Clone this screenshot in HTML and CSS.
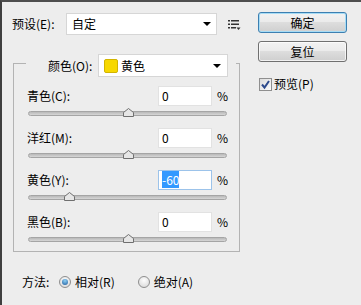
FILE: index.html
```html
<!DOCTYPE html>
<html lang="zh-CN">
<head>
<meta charset="UTF-8" />
<meta name="viewport" content="width=device-width, initial-scale=1.0"/>
<title>可选颜色</title>
<link rel="stylesheet" href="styles.css">
</head>
<body>
<div class="window">
    <div class="main">
        <div class="preset-row">
            <span class="label preset-label">预设(E):</span>
            <div class="select preset-select"><span>自定</span><i class="arrow"></i></div>
            <svg class="menu-icon" width="13" height="10" viewBox="0 0 13 10">
                <rect x="0" y="0" width="2" height="1.5" fill="#333"/>
                <rect x="3" y="0" width="8" height="1.5" fill="#333"/>
                <rect x="0" y="3.5" width="2" height="1.5" fill="#333"/>
                <rect x="3" y="3.5" width="8" height="1.5" fill="#333"/>
                <rect x="0" y="7" width="2" height="1.5" fill="#333"/>
                <rect x="3" y="7" width="5" height="1.5" fill="#333"/>
                <polygon points="8.5,7.5 12.5,7.5 10.5,10" fill="#333"/>
            </svg>
        </div>
        <fieldset class="group">
            <legend class="group-head">
                <span class="label head-label">颜色(O):</span>
                <div class="select color-select"><span class="swatch"></span><span>黄色</span><i class="arrow"></i></div>
            </legend>
            <div class="channel">
                <div class="channel-top"><span class="label">青色(C):</span><div class="field">0</div><span class="pct">%</span></div>
                <div class="slider"><div class="track"></div><svg class="thumb" style="left: 50%" width="11" height="9" viewBox="0 0 11 9"><polygon points="0.5,8.5 0.5,4.5 5.5,0.5 10.5,4.5 10.5,8.5" fill="#e6e6e6" stroke="#6f6f6f"/></svg></div>
            </div>
            <div class="channel">
                <div class="channel-top"><span class="label">洋红(M):</span><div class="field">0</div><span class="pct">%</span></div>
                <div class="slider"><div class="track"></div><svg class="thumb" style="left: 50%" width="11" height="9" viewBox="0 0 11 9"><polygon points="0.5,8.5 0.5,4.5 5.5,0.5 10.5,4.5 10.5,8.5" fill="#e6e6e6" stroke="#6f6f6f"/></svg></div>
            </div>
            <div class="channel">
                <div class="channel-top"><span class="label">黄色(Y):</span><div class="field focused"><span class="sel">-60</span></div><span class="pct">%</span></div>
                <div class="slider"><div class="track"></div><svg class="thumb" style="left: 21%" width="11" height="9" viewBox="0 0 11 9"><polygon points="0.5,8.5 0.5,4.5 5.5,0.5 10.5,4.5 10.5,8.5" fill="#e6e6e6" stroke="#6f6f6f"/></svg></div>
            </div>
            <div class="channel">
                <div class="channel-top"><span class="label">黑色(B):</span><div class="field">0</div><span class="pct">%</span></div>
                <div class="slider"><div class="track"></div><svg class="thumb" style="left: 50%" width="11" height="9" viewBox="0 0 11 9"><polygon points="0.5,8.5 0.5,4.5 5.5,0.5 10.5,4.5 10.5,8.5" fill="#e6e6e6" stroke="#6f6f6f"/></svg></div>
            </div>
        </fieldset>
        <div class="method-row">
            <span class="label method-label">方法:</span>
            <span class="radio checked"></span><span class="option first">相对(R)</span>
            <span class="radio"></span><span class="option">绝对(A)</span>
        </div>
    </div>
    <div class="side">
        <button class="btn btn-default">确定</button>
        <button class="btn">复位</button>
        <div class="check-row">
            <span class="checkbox">
                <svg width="11" height="11" viewBox="0 0 11 11"><path d="M2 5.5 L4.5 8.5 L9 2" fill="none" stroke="#2d4a8c" stroke-width="2"/></svg>
            </span>
            <span>预览(P)</span>
        </div>
    </div>
</div>
</body>
</html>
```

FILE: styles.css
```css
body {
    margin: 0;
    background-color: #ededed;
    color: #000;
    font-family: "Noto Sans CJK SC", "Noto Sans", sans-serif;
    font-size: 12px;
    line-height: 16px;
}
.window {
    display: grid;
    grid-template-columns: 256px 89px;
    height: 305px;
    box-sizing: border-box;
    border-top: 2px solid #4e4e4e;
    border-left: 2px solid #3f3f3f;
}
.main {
    padding: 11px 0 0 10px;
}
.preset-row {
    display: flex;
    align-items: center;
    height: 22px;
}
.preset-label { width: 54px; }
.select {
    display: flex;
    align-items: center;
    box-sizing: border-box;
    background-color: #fff;
    border: 1px solid #d6d6d6;
}
.select .arrow {
    margin-left: auto;
    width: 0;
    height: 0;
    border-left: 4px solid transparent;
    border-right: 4px solid transparent;
    border-top: 4px solid #000;
}
.preset-select {
    width: 151px;
    height: 22px;
    padding: 0 5px 0 5px;
}
.menu-icon { margin-left: 11px; margin-top: 1px; }

.group {
    margin: 15px 0 0 1px;
    width: 227px;
    box-sizing: border-box;
    padding: 0 11px 5px 13px;
    border: 1px solid #b3b3b3;
    min-width: 0;
}
.group-head {
    display: flex;
    align-items: center;
    width: 210px;
    box-sizing: border-box;
    margin-left: -1px;
    padding: 4px 8px 0 22px;
}
.head-label { width: 50px; }
.color-select {
    width: 130px;
    height: 23px;
    padding: 0 6px 0 5px;
}
.swatch {
    width: 14px;
    height: 14px;
    box-sizing: border-box;
    background-color: #f7d800;
    border: 1px solid #d2b400;
    border-radius: 2px;
    margin-right: 3px;
}

.channel { margin-top: 9px; }
.channel + .channel { margin-top: 8px; }
.channel-top {
    display: flex;
    align-items: center;
    height: 20px;
}
.channel-top .label { flex: 1; }
.field {
    width: 54px;
    height: 20px;
    box-sizing: border-box;
    background-color: #fff;
    border: 1px solid #e2e2e2;
    padding-left: 3px;
    line-height: 18px;
}
.field.focused { border-color: #9cc3ea; }
.sel {
    background-color: #3399ff;
    color: #fff;
}
.pct {
    width: 16px;
    text-align: right;
}
.slider {
    position: relative;
    height: 14px;
    padding-top: 5px;
    box-sizing: border-box;
}
.track {
    margin: 0 1px;
    height: 5px;
    box-sizing: border-box;
    border: 1px solid #a5a5a5;
    border-radius: 3px;
    background: linear-gradient(#b9b9b9, #d6d6d6);
}
.thumb {
    position: absolute;
    top: 2px;
    margin-left: -5px;
}

.method-row {
    display: flex;
    align-items: center;
    height: 16px;
    margin: 22px 0 0 10px;
}
.method-label { width: 37px; }
.radio {
    width: 12px;
    height: 12px;
    box-sizing: border-box;
    border-radius: 50%;
    border: 1px solid #8e8e8e;
    background: radial-gradient(circle at 50% 35%, #fdfdfd, #d4d4d4);
    margin-right: 4px;
    display: flex;
    align-items: center;
    justify-content: center;
}
.radio.checked::after {
    content: "";
    width: 6px;
    height: 6px;
    border-radius: 50%;
    background: radial-gradient(circle at 50% 30%, #8fd0f5, #1b5a9c);
}
.option.first { margin-right: 23px; }

.side {
    display: flex;
    flex-direction: column;
    padding-top: 10px;
}
.btn {
    width: 89px;
    height: 21px;
    padding: 0;
    font: inherit;
    color: #000;
    border: 1px solid #707070;
    border-radius: 3px;
    background: linear-gradient(#f2f2f2 0%, #ebebeb 45%, #dddddd 50%, #cfcfcf 100%);
    box-shadow: inset 0 0 0 1px rgba(255, 255, 255, 0.7);
    cursor: pointer;
}
.btn + .btn { margin-top: 8px; }
.btn-default {
    border-color: #3c7fb1;
    box-shadow: inset 0 0 0 1px #a7dcf5;
}
.check-row {
    display: flex;
    align-items: center;
    gap: 2px;
    margin-top: 14px;
    margin-left: 1px;
}
.checkbox {
    width: 13px;
    height: 13px;
    box-sizing: border-box;
    border: 1px solid #8f8f8f;
    background: linear-gradient(135deg, #dcdcdc, #fbfbfb);
    display: flex;
    align-items: center;
    justify-content: center;
}
```
